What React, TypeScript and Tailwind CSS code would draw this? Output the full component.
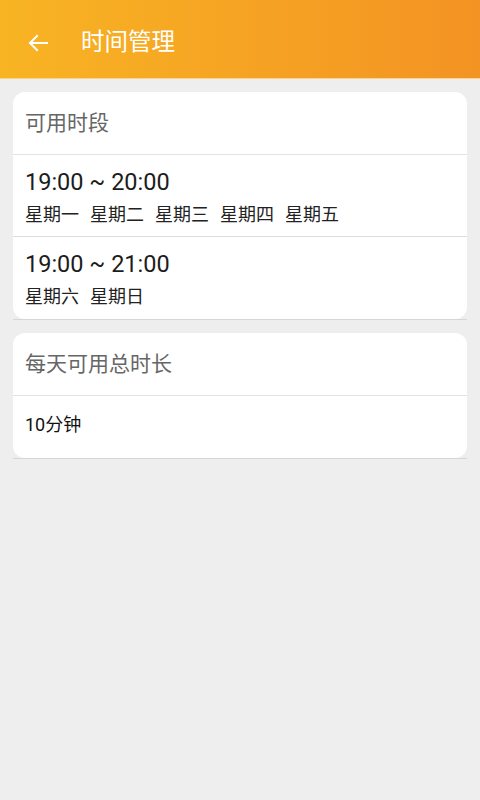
import React from "react";

const slots = [
  { range: "19:00 ~ 20:00", days: ["星期一", "星期二", "星期三", "星期四", "星期五"] },
  { range: "19:00 ~ 21:00", days: ["星期六", "星期日"] },
];

const font = { fontFamily: 'Roboto, "Noto Sans CJK SC", sans-serif' };

export default function App() {
  return (
    <div className="w-[480px] h-[800px] bg-[#eeeeee]" style={font}>
      <header className="h-[79px] pt-[8px] flex items-center bg-gradient-to-r from-[#f8b423] to-[#f39323] border-b border-[#fbd38a]">
        <button className="w-[50px] h-[50px] ml-[13px] flex items-center justify-center text-white">
          <svg width="24" height="24" viewBox="0 0 24 24" fill="none" stroke="currentColor" strokeWidth="2" strokeLinecap="square">
            <path d="M21 12H4M11 5l-7 7 7 7" />
          </svg>
        </button>
        <h1 className="ml-[18px] text-[23.5px] text-white">时间管理</h1>
      </header>

      <div className="px-[13px] pt-[13px] flex flex-col gap-[13px]">
        <div className="border-b border-[#d6d6d6]">
          <div className="bg-white rounded-[12px] overflow-hidden">
            <div className="h-[63px] flex items-center px-[12px] pt-[1px] text-[21px] text-[#666666] border-b border-[#e3e3e3]">
              可用时段
            </div>
            {slots.map((s, i) => (
              <div
                key={s.range}
                className={`h-[82px] px-[12px] pt-[12px] ${i === 0 ? "border-b border-[#dcdcdc]" : ""}`}
              >
                <div className="text-[23.5px] leading-[30px] text-[#1c1c1c]">{s.range}</div>
                <div className="flex gap-[11px] mt-[6px] text-[18px] leading-[24px] text-[#222222]">
                  {s.days.map((d) => (
                    <span key={d}>{d}</span>
                  ))}
                </div>
              </div>
            ))}
          </div>
        </div>

        <div className="border-b border-[#d6d6d6]">
          <div className="bg-white rounded-[12px] overflow-hidden">
            <div className="h-[63px] flex items-center px-[12px] pt-[1px] text-[21px] text-[#666666] border-b border-[#e3e3e3]">
              每天可用总时长
            </div>
            <div className="h-[62px] flex items-center px-[12px] pb-[5px] text-[18px] text-[#111111]">10分钟</div>
          </div>
        </div>
      </div>
    </div>
  );
}
